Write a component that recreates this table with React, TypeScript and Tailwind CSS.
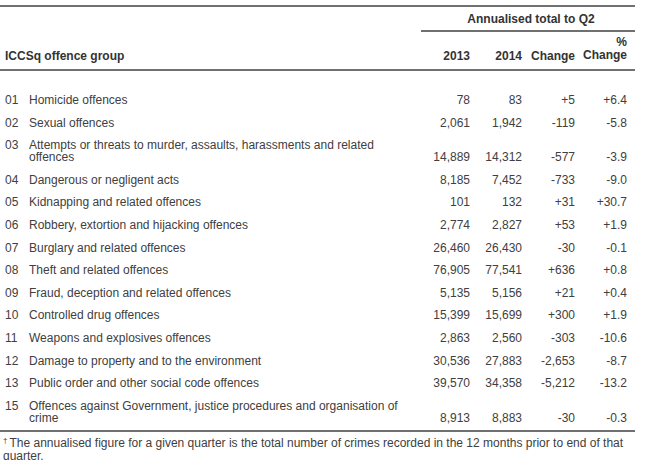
const rows: [string, string, string, string, string, string][] = [
  ['01', 'Homicide offences', '78', '83', '+5', '+6.4'],
  ['02', 'Sexual offences', '2,061', '1,942', '-119', '-5.8'],
  ['03', 'Attempts or threats to murder, assaults, harassments and related offences', '14,889', '14,312', '-577', '-3.9'],
  ['04', 'Dangerous or negligent acts', '8,185', '7,452', '-733', '-9.0'],
  ['05', 'Kidnapping and related offences', '101', '132', '+31', '+30.7'],
  ['06', 'Robbery, extortion and hijacking offences', '2,774', '2,827', '+53', '+1.9'],
  ['07', 'Burglary and related offences', '26,460', '26,430', '-30', '-0.1'],
  ['08', 'Theft and related offences', '76,905', '77,541', '+636', '+0.8'],
  ['09', 'Fraud, deception and related offences', '5,135', '5,156', '+21', '+0.4'],
  ['10', 'Controlled drug offences', '15,399', '15,699', '+300', '+1.9'],
  ['11', 'Weapons and explosives offences', '2,863', '2,560', '-303', '-10.6'],
  ['12', 'Damage to property and to the environment', '30,536', '27,883', '-2,653', '-8.7'],
  ['13', 'Public order and other social code offences', '39,570', '34,358', '-5,212', '-13.2'],
  ['15', 'Offences against Government, justice procedures and organisation of crime', '8,913', '8,883', '-30', '-0.3'],
]

export default function App() {
  return (
    <div className="w-[650px] h-[460px] bg-white text-[#404040] text-[12px] leading-[12px] overflow-hidden" style={{ fontFamily: '"Liberation Sans", Arial, sans-serif' }}>
      <div className="w-[635px] pt-[5px]">
        <div className="border-t-2 border-[#707070]" />
        <div className="flex font-bold text-[#333]">
          <div className="flex-1" />
          <div className="w-[214px] pt-[6px] pb-[5px] text-center border-b-2 border-[#707070] pl-[6px]">Annualised total to Q2</div>
        </div>
        <div className="flex items-end font-bold text-[#333] pt-[4px] pb-[7px] border-b-2 border-[#707070]">
          <div className="flex-1 pl-[5px]">ICCSq offence group</div>
          <div className="w-[50px] text-right">2013</div>
          <div className="w-[52px] text-right">2014</div>
          <div className="w-[53px] text-right">Change</div>
          <div className="w-[52px] text-right leading-[13px]">%<br />Change</div>
          <div className="w-[8px]" />
        </div>
        <div className="pt-[23px] pb-[6px] border-b-2 border-[#707070] flex flex-col gap-[10.6px]">
          {rows.map(r => (
            <div key={r[0]} className="flex items-end">
              <div className="w-[29px] pl-[5px] self-start">{r[0]}</div>
              <div className="w-[375px]">{r[1]}</div>
              <div className="flex-1" />
              <div className="w-[50px] text-right">{r[2]}</div>
              <div className="w-[52px] text-right">{r[3]}</div>
              <div className="w-[53px] text-right">{r[4]}</div>
              <div className="w-[52px] text-right">{r[5]}</div>
              <div className="w-[8px]" />
            </div>
          ))}
        </div>
        <div className="pt-[5px] pl-[3px] leading-[13px] w-[640px]">
          <span className="inline-block align-top text-[8px] leading-[8px] mr-[2px]">†</span>The annualised figure for a given quarter is the total number of crimes recorded in the 12 months prior to end of that quarter.
        </div>
      </div>
    </div>
  )
}
